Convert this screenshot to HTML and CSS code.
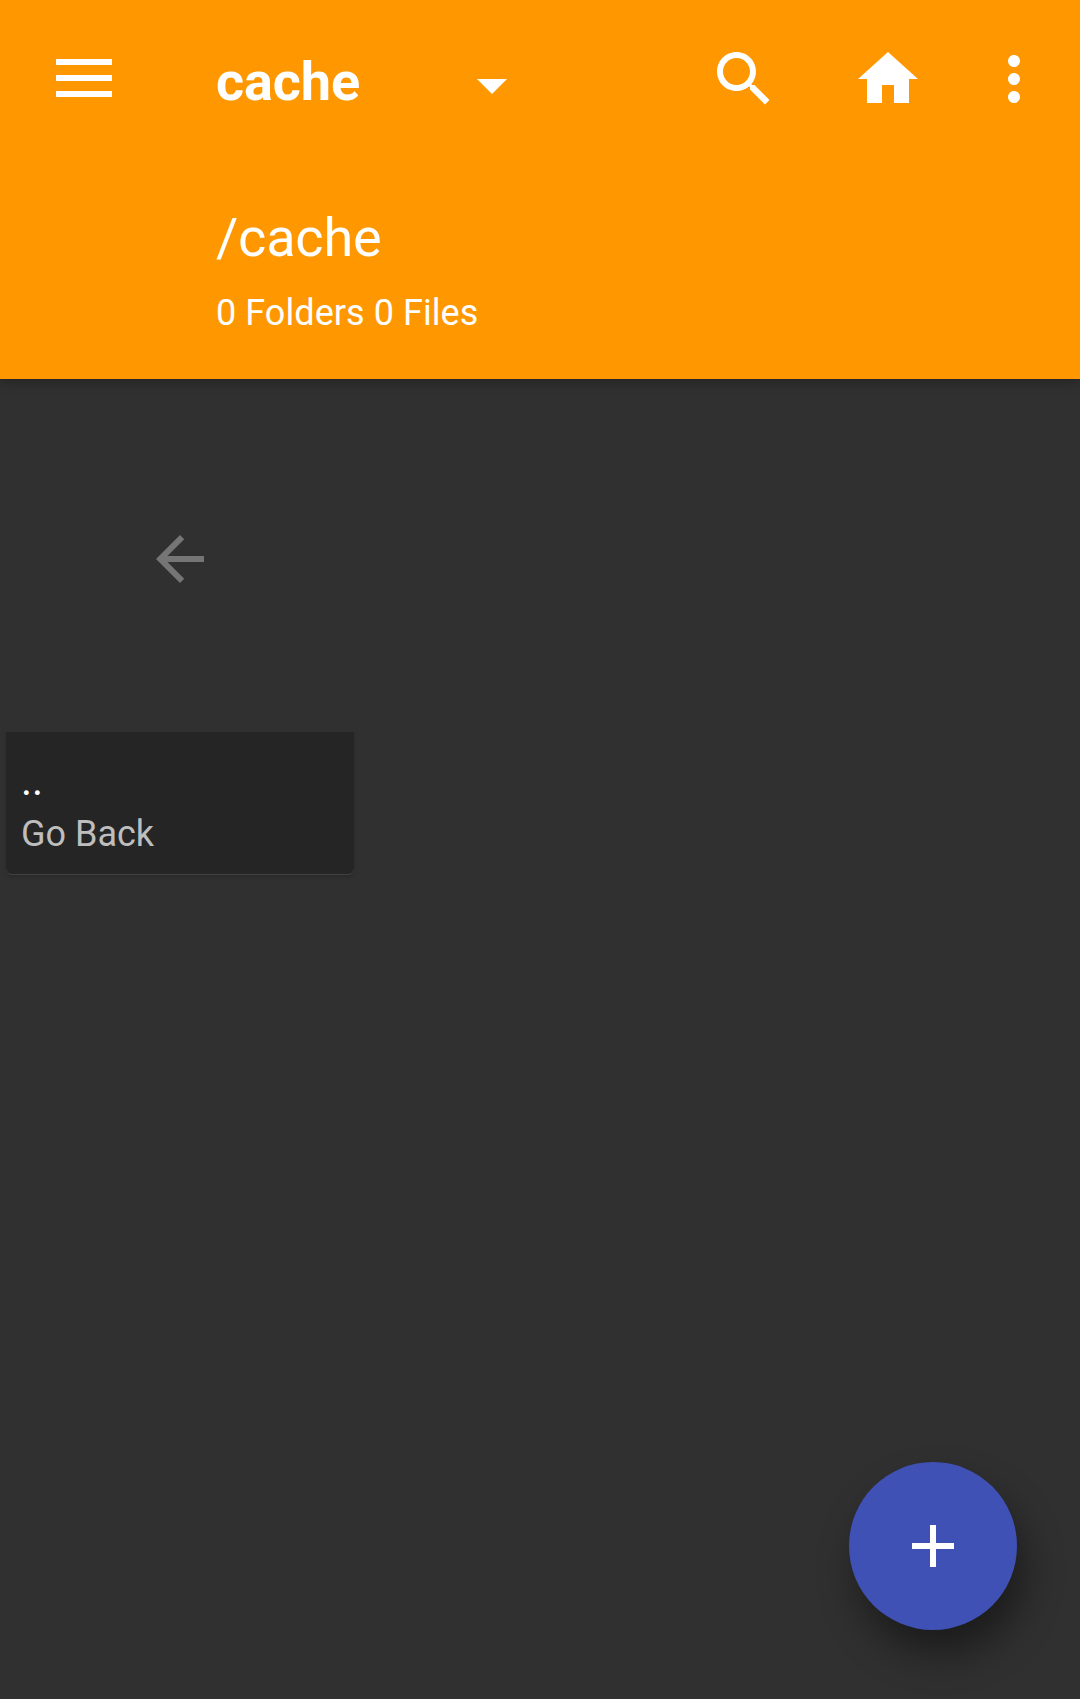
FILE: index.html
```html
<!DOCTYPE html>
<html lang="en">
<head>
<meta charset="utf-8">
<title>cache</title>
<link rel="stylesheet" href="styles.css">
</head>
<body>
<div class="app">
  <header class="header">
    <div class="toolbar">
      <svg class="icon menu" viewBox="0 0 56 38"><path d="M0 0h56v6H0zM0 16h56v6H0zM0 32h56v6H0z"/></svg>
      <h1 class="title">cache</h1>
      <svg class="icon caret" viewBox="0 0 30 15"><path d="M0 0h30L15 15z"/></svg>
      <svg class="icon action search" viewBox="0 0 24 24"><path d="M15.5 14h-.79l-.28-.27C15.41 12.59 16 11.11 16 9.5 16 5.91 13.09 3 9.5 3S3 5.91 3 9.5 5.91 16 9.5 16c1.61 0 3.09-.59 4.23-1.57l.27.28v.79l5 4.99L20.49 19l-4.99-5zm-6 0C7.01 14 5 11.99 5 9.5S7.01 5 9.5 5 14 7.01 14 9.5 11.99 14 9.5 14z"/></svg>
      <svg class="icon action home" viewBox="0 0 24 24"><path d="M10 20v-6h4v6h5v-8h3L12 3 2 12h3v8z"/></svg>
      <svg class="icon action more" viewBox="0 0 24 24"><path d="M12 8c1.1 0 2-.9 2-2s-.9-2-2-2-2 .9-2 2 .9 2 2 2zm0 2c-1.1 0-2 .9-2 2s.9 2 2 2 2-.9 2-2-.9-2-2-2zm0 6c-1.1 0-2 .9-2 2s.9 2 2 2 2-.9 2-2-.9-2-2-2z"/></svg>
    </div>
    <div class="path">/cache</div>
    <div class="summary">0 Folders 0 Files</div>
  </header>
  <main class="grid">
    <div class="tile">
      <div class="preview">
        <svg class="icon back" viewBox="0 0 24 24"><path d="M20 11H7.83l5.59-5.59L12 4l-8 8 8 8 1.41-1.41L7.83 13H20v-2z"/></svg>
      </div>
      <div class="label">
        <div class="name">..</div>
        <div class="hint">Go Back</div>
      </div>
    </div>
  </main>
  <button class="fab" aria-label="Add"><svg class="icon plus" viewBox="0 0 24 24"><path d="M19 13h-6v6h-2v-6H5v-2h6V5h2v6h6v2z"/></svg></button>
</div>
</body>
</html>
```
FILE: styles.css
```css
body {
  margin: 0;
  background: #303030;
  font-family: Roboto, "Liberation Sans", sans-serif;
}
.app {
  position: relative;
  height: 1699px;
  overflow: hidden;
}
.icon {
  display: block;
  flex: none;
  fill: #fff;
}
.header {
  height: 379px;
  background: #ff9800;
  color: #fff;
  box-shadow: 0 2px 12px rgba(0, 0, 0, .3);
}
.toolbar {
  display: flex;
  align-items: center;
  height: 156px;
  padding-left: 56px;
}
.menu {
  width: 56px;
  height: 38px;
}
.title {
  width: 261px;
  margin: 8px 0 0 104px;
  font-size: 54px;
  line-height: 64px;
  font-weight: 700;
  letter-spacing: -.1px;
}
.caret {
  width: 30px;
  height: 15px;
  margin-top: 16px;
}
.action {
  width: 72px;
  height: 72px;
  margin-top: 2px;
}
.search {
  margin-left: 201px;
}
.home {
  margin-left: 72px;
}
.more {
  margin-left: 54px;
}
.path {
  margin: 50px 0 0 216px;
  font-size: 54px;
  line-height: 64px;
  letter-spacing: -.2px;
}
.summary {
  margin: 22px 0 0 216px;
  font-size: 36px;
  line-height: 42px;
  letter-spacing: .06px;
}
.grid {
  padding: 0 6px;
}
.tile {
  width: 348px;
}
.preview {
  display: flex;
  align-items: center;
  justify-content: center;
  height: 353px;
}
.back {
  width: 72px;
  height: 72px;
  margin-top: 7px;
  fill: #757575;
}
.label {
  box-sizing: border-box;
  height: 142px;
  padding: 27px 15px 0;
  border-radius: 0 0 6px 6px;
  background: #252525;
  box-shadow: 0 1px 0 #424242, 0 3px 3px rgba(0, 0, 0, .14);
}
.name {
  color: #fff;
  font-size: 42px;
  line-height: 44px;
}
.hint {
  margin-top: 9px;
  color: #bebebe;
  font-size: 36px;
  line-height: 44px;
}
.fab {
  position: absolute;
  right: 63px;
  bottom: 69px;
  display: flex;
  align-items: center;
  justify-content: center;
  width: 168px;
  height: 168px;
  padding: 0;
  border: 0;
  border-radius: 50%;
  background: #3f51b5;
  box-shadow: 8px 24px 40px -2px rgba(0, 0, 0, .45);
}
.plus {
  width: 72px;
  height: 72px;
}
```
